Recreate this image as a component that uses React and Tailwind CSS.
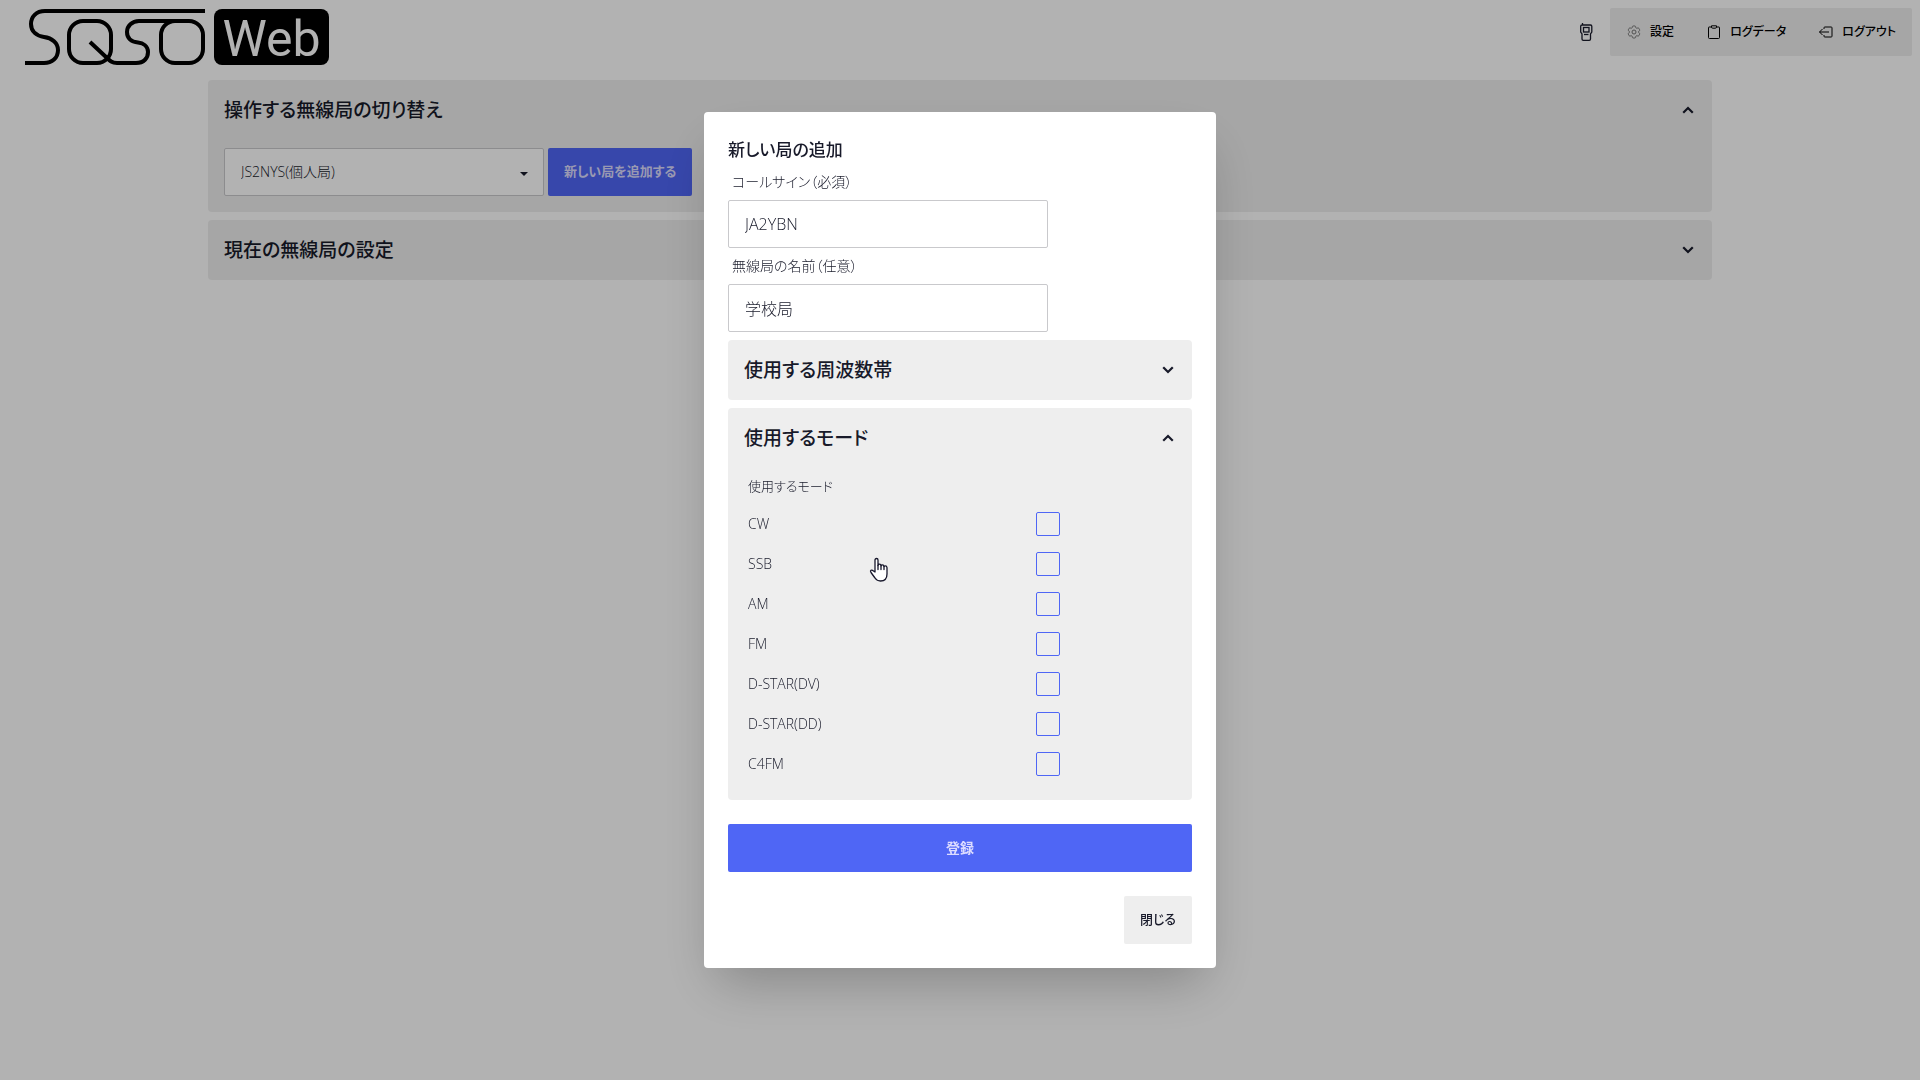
import { useState } from "react";

const MODES = ["CW", "SSB", "AM", "FM", "D-STAR(DV)", "D-STAR(DD)", "C4FM"];

function Logo() {
  return (
    <a href="#home" aria-label="SQSO Web" className="flex items-center gap-2 pl-4 text-black">
      <svg width="182" height="58" viewBox="24 8 182 58" fill="none" stroke="currentColor" strokeWidth="4">
        <path d="M205 11H45C36 11 31 17 31 24C31 32 37 36 44 37C52 38 58 43 58 50C58 58 52 63 44 63H25" />
        <rect x="69" y="21" width="42" height="42" rx="14" />
        <path d="M90 42L106 57C110 61 112 63 117 63H136C144 63 148 58 148 52C148 46 143 43 138 42.500C131 42 127 38 127 32C127 26 132 21 139 21H180" />
        <rect x="161" y="21" width="42" height="42" rx="14" />
      </svg>
      <span className="flex h-14 w-[115px] items-center justify-center rounded-lg bg-black pt-1 font-[Roboto] text-[50px] leading-none text-white">
        Web
      </span>
    </a>
  );
}

function RadioIcon() {
  return (
    <svg width="16" height="20" viewBox="0 0 16 20" fill="none" stroke="currentColor" strokeWidth="1.300">
      <path d="M4.500 1V3M4 3H12.500Q13.800 3 13.800 4.300V10L12.500 12V17Q12.500 18.300 11.200 18.300H5.300Q4 18.300 4 17V12L2.700 10V4.300Q2.700 3 4 3Z" />
      <rect x="5.500" y="5.500" width="5.500" height="4.500" />
      <path d="M6 12.500H10.500" />
    </svg>
  );
}

function GearIcon() {
  return (
    <svg width="16" height="16" viewBox="0 0 24 24" fill="none" stroke="currentColor" strokeWidth="1.500" strokeLinejoin="round" className="opacity-50">
      <path d="M9.600 3.900c.1-.5.600-.9 1.100-.9h2.600c.5 0 1 .4 1.100.9l.2 1.300c.1.400.3.700.600.9l.3.100c.3.200.7.300 1.100.1l1.200-.4c.5-.2 1.100 0 1.400.5l1.300 2.200c.3.500.2 1.100-.3 1.400l-1 .8c-.3.300-.4.600-.4 1v.3c0 .4.100.7.400 1l1 .8c.4.400.5 1 .3 1.400l-1.300 2.300c-.3.500-.8.700-1.400.5l-1.200-.5c-.4-.1-.8-.1-1.100.1l-.3.200c-.3.200-.5.500-.6.900l-.2 1.300c-.1.500-.6.900-1.100.9h-2.600c-.5 0-1-.4-1.100-.9l-.2-1.300c-.1-.4-.3-.7-.6-.9l-.3-.2c-.3-.2-.7-.2-1.100-.1l-1.200.5c-.5.200-1.100 0-1.400-.5l-1.300-2.300c-.3-.5-.2-1.100.3-1.400l1-.8c.3-.3.400-.6.400-1v-.3c0-.4-.1-.7-.4-1l-1-.8c-.4-.4-.5-1-.3-1.400l1.300-2.200c.3-.5.800-.7 1.400-.5l1.200.4c.4.200.8.100 1.100-.1l.3-.1c.3-.2.500-.5.600-.9z" />
      <circle cx="12" cy="12" r="3" />
    </svg>
  );
}

function ClipboardIcon() {
  return (
    <svg width="16" height="16" viewBox="0 0 16 16" fill="none" stroke="currentColor" strokeWidth="1">
      <path d="M5.500 3H3Q2.500 3 2.500 3.500V13.500Q2.500 14.500 3.500 14.500H12.500Q13.500 14.500 13.500 13.500V3.500Q13.500 3 13 3H10.500" />
      <path d="M5.500 1.800H10.500V3Q10.500 4.200 9.300 4.200H6.700Q5.500 4.200 5.500 3Z" />
    </svg>
  );
}

function LogoutIcon() {
  return (
    <svg width="16" height="16" viewBox="0 0 16 16" fill="none" stroke="currentColor" strokeWidth="1">
      <path d="M6 5V3.800Q6 3 6.800 3H13.200Q14 3 14 3.800V12.200Q14 13 13.200 13H6.800Q6 13 6 12.200V11" />
      <path d="M11 8H1.500M4.500 5L1.500 8L4.500 11" />
    </svg>
  );
}

function Chevron({ open }) {
  return (
    <svg width="16" height="16" viewBox="0 0 16 16" fill="none" stroke="currentColor" strokeWidth="2.200" strokeLinecap="square">
      <path d={open ? "M4 10L8 6L12 10" : "M4 6L8 10L12 6"} />
    </svg>
  );
}

function Collapse({ title, defaultOpen = false, children }) {
  const [open, setOpen] = useState(defaultOpen);
  return (
    <section className="rounded bg-[#eeeeee]">
      <h2>
        <button
          type="button"
          aria-expanded={open}
          onClick={() => setOpen(!open)}
          className="flex w-full items-center justify-between p-4 text-left text-[19px] leading-7 font-medium"
        >
          {title}
          <Chevron open={open} />
        </button>
      </h2>
      {open && <div className="px-4 pb-4">{children}</div>}
    </section>
  );
}

function TextField({ id, label, value }) {
  return (
    <div className="w-full max-w-xs">
      <label htmlFor={id} className="block px-1 py-2 text-sm font-light">
        {label}
      </label>
      <input
        id={id}
        type="text"
        defaultValue={value}
        className="block h-12 w-full rounded-xs border border-[#c9c9cc] bg-white px-4 text-base font-light"
      />
    </div>
  );
}

function ModeRow({ name }) {
  return (
    <label className="flex h-10 w-full max-w-xs items-center justify-between px-1 text-sm font-light">
      {name}
      <input type="checkbox" className="size-6 appearance-none rounded-xs border border-[#4f66f5] checked:bg-[#4f66f5]" />
    </label>
  );
}

function NavLink({ href, icon, children }) {
  return (
    <a href={href} className="flex h-12 items-center gap-2 px-4 text-xs font-medium">
      {icon}
      {children}
    </a>
  );
}

function HandCursor() {
  return (
    <svg
      aria-hidden="true"
      width="20"
      height="26"
      viewBox="0 0 20 26"
      fill="#fff"
      stroke="#16162a"
      strokeWidth="1.300"
      strokeLinejoin="round"
      strokeLinecap="round"
      className="pointer-events-none fixed left-[869px] top-[557px]"
    >
      <path d="M6 15V3Q6 1.500 7.500 1.500T9 3V8.500Q9 7.200 10.500 7.200T12 8.800Q12.200 7.900 13.500 7.900T15 9.500Q15.300 8.900 16.500 8.900T18 10.600V17Q18 24 11.500 24Q8 24 6 21L2 15.500Q1 14 2 13.300T4.500 14Z" />
      <path d="M9 8.500V12.500M12 8.800V12.500M15 9.500V12.500" fill="none" />
    </svg>
  );
}

export default function App() {
  return (
    <div className="min-h-screen bg-white font-['Open_Sans','Noto_Sans_CJK_JP',sans-serif] text-[#181a2a] [font-feature-settings:'palt']">
      <header className="flex items-start justify-between p-2">
        <Logo />
        <div className="flex">
          <button type="button" aria-label="無線機" className="flex size-12 items-center justify-center">
            <RadioIcon />
          </button>
          <nav className="flex rounded-xs bg-[#eeeeee] text-black">
            <NavLink href="#settings" icon={<GearIcon />}>設定</NavLink>
            <NavLink href="#log" icon={<ClipboardIcon />}>ログデータ</NavLink>
            <NavLink href="#logout" icon={<LogoutIcon />}>ログアウト</NavLink>
          </nav>
        </div>
      </header>

      <main className="mx-auto flex max-w-screen-2xl flex-col gap-2 px-4 pt-1.5">
        <Collapse title="操作する無線局の切り替え" defaultOpen>
          <div className="flex gap-1 pt-2">
            <div className="relative w-full max-w-xs">
              <select
                aria-label="操作する無線局"
                className="h-12 w-full appearance-none rounded-xs border border-[#c9c9cc] bg-white px-4 text-sm font-light"
              >
                <option>JS2NYS(個人局)</option>
              </select>
              <svg width="8" height="4" viewBox="0 0 8 4" className="pointer-events-none absolute right-4 top-1/2">
                <path d="M0 0H8L4 4Z" fill="currentColor" />
              </svg>
            </div>
            <button type="button" className="h-12 rounded-xs bg-[#4f66f5] px-4 text-[13px] font-bold text-[#dcdcff]">
              新しい局を追加する
            </button>
          </div>
        </Collapse>
        <Collapse title="現在の無線局の設定" />
      </main>

      <div className="fixed inset-0 flex items-center justify-center bg-black/30">
        <form
          role="dialog"
          aria-modal="true"
          aria-labelledby="dialog-title"
          onSubmit={(e) => e.preventDefault()}
          className="w-full max-w-lg rounded bg-white p-6 shadow-2xl"
        >
          <h3 id="dialog-title" className="text-[17px] leading-7 font-medium">新しい局の追加</h3>
          <TextField id="callsign" label="コールサイン（必須）" value="JA2YBN" />
          <TextField id="station-name" label="無線局の名前（任意）" value="学校局" />
          <div className="flex flex-col gap-2 pt-2">
            <Collapse title="使用する周波数帯" />
            <Collapse title="使用するモード" defaultOpen>
              <fieldset>
                <legend className="px-1 py-2 text-[13px] leading-5 font-light">使用するモード</legend>
                {MODES.map((name) => (
                  <ModeRow key={name} name={name} />
                ))}
              </fieldset>
            </Collapse>
          </div>
          <button type="submit" className="mt-6 h-12 w-full rounded-xs bg-[#4f66f5] text-sm font-bold text-[#dcdcff]">
            登録
          </button>
          <div className="mt-6 flex justify-end">
            <button type="button" className="h-12 rounded-xs bg-[#eeeeee] px-4 text-[13px] font-medium">
              閉じる
            </button>
          </div>
        </form>
      </div>
      <HandCursor />
    </div>
  );
}
